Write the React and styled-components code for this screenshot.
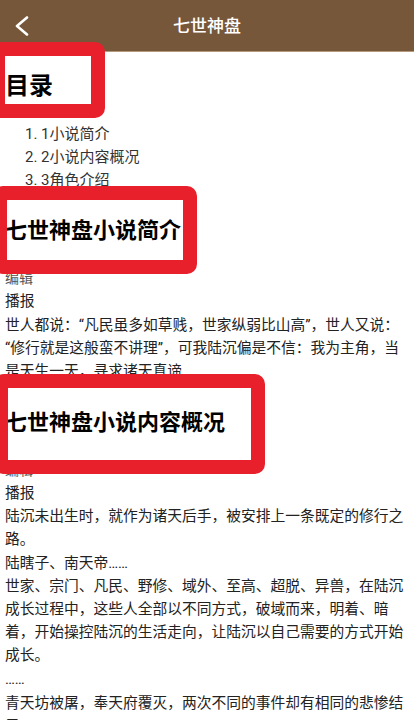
import React from "react";
import styled, { createGlobalStyle } from "styled-components";

const Global = createGlobalStyle`
  html, body {
    margin: 0;
    padding: 0;
    background: #ffffff;
    overflow-x: hidden;
  }
  body {
    font-family: Roboto, "Noto Sans CJK SC", sans-serif;
    -webkit-font-smoothing: antialiased;
  }
  p, h1, h2, ol { margin: 0; padding: 0; }
`;

const Page = styled.div`
  width: 414px;
  min-height: 720px;
  overflow: hidden;
  background: #fff;
`;

const Header = styled.header`
  height: 52px;
  background: #77573a;
  display: grid;
  grid-template-columns: 52px 1fr 52px;
  align-items: center;
  border-bottom: 1px solid #b49a7c;
  box-sizing: border-box;
`;

const BackButton = styled.button`
  border: 0;
  background: transparent;
  padding: 0 0 0 15px;
  height: 52px;
  display: flex;
  align-items: center;
  cursor: pointer;
`;

const Title = styled.h1`
  text-align: center;
  color: #ffffff;
  font-size: 17px;
  font-weight: 500;
  line-height: 52px;
`;

const Content = styled.main`
  padding: 0 0 0 5px;
`;

const HeadingWrap = styled.div`
  position: relative;
  margin-top: ${(p) => p.$mt}px;
`;

const Heading = styled.h2`
  font-size: ${(p) => p.$size}px;
  line-height: ${(p) => p.$lh}px;
  font-weight: 700;
  color: #000;
  white-space: nowrap;
`;

const Frame = styled.div`
  position: absolute;
  z-index: 2;
  top: ${(p) => p.$top}px;
  left: ${(p) => p.$left}px;
  width: ${(p) => p.$w}px;
  height: ${(p) => p.$h}px;
  box-sizing: border-box;
  border: 14px solid #e8202b;
  border-radius: 10px;
  pointer-events: none;
`;

const Toc = styled.ol`
  list-style: none;
  margin-top: 21px;
  padding-left: 20px;
`;

const TocItem = styled.li`
  font-size: 15px;
  line-height: 23px;
  color: #333;
`;

const EditLabel = styled.div`
  margin-top: 21px;
  font-size: 14px;
  line-height: 23px;
  color: #555;
`;

const Para = styled.p`
  font-size: 14.75px;
  line-height: 23px;
  color: #222;
  white-space: nowrap;
  & + & {
    margin-top: 0.6px;
  }
`;

const BackIcon = () => (
  <svg width="14" height="20" viewBox="0 0 14 20" fill="none">
    <polyline
      points="12,1.5 2,10 12,18.5"
      stroke="#fff"
      strokeWidth="2.6"
      strokeLinecap="round"
      strokeLinejoin="round"
    />
  </svg>
);

export default function App() {
  return (
    <>
      <Global />
      <Page>
        <Header>
          <BackButton aria-label="返回">
            <BackIcon />
          </BackButton>
          <Title>七世神盘</Title>
          <span />
        </Header>
        <Content>
          <HeadingWrap $mt={18}>
            <Heading $size={24} $lh={32}>目录</Heading>
            <Frame $top={-28} $left={-14} $w={114} $h={76} />
          </HeadingWrap>
          <Toc>
            <TocItem>1. 1小说简介</TocItem>
            <TocItem>2. 2小说内容概况</TocItem>
            <TocItem>3. 3角色介绍</TocItem>
          </Toc>

          <HeadingWrap $mt={24}>
            <Heading $size={22} $lh={30}>七世神盘小说简介</Heading>
            <Frame $top={-30} $left={-12} $w={204} $h={88} />
          </HeadingWrap>
          <EditLabel>编辑</EditLabel>
          <Para>播报</Para>
          <Para>
            世人都说：“凡民虽多如草贱，世家纵弱比山高”，世人又说：<br />
            “修行就是这般蛮不讲理”，可我陆沉偏是不信：我为主角，当<br />
            是天生一天，寻求诸天真谛
          </Para>

          <HeadingWrap $mt={25}>
            <Heading $size={22} $lh={30}>七世神盘小说内容概况</Heading>
            <Frame $top={-34} $left={-11} $w={271} $h={100} />
          </HeadingWrap>
          <EditLabel>编辑</EditLabel>
          <Para>播报</Para>
          <Para>
            陆沉未出生时，就作为诸天后手，被安排上一条既定的修行之<br />
            路。
          </Para>
          <Para>陆瞎子、南天帝……</Para>
          <Para>
            世家、宗门、凡民、野修、域外、至高、超脱、异兽，在陆沉<br />
            成长过程中，这些人全部以不同方式，破域而来，明着、暗<br />
            着，开始操控陆沉的生活走向，让陆沉以自己需要的方式开始<br />
            成长。
          </Para>
          <Para>……</Para>
          <Para>
            青天坊被屠，奉天府覆灭，两次不同的事件却有相同的悲惨结<br />
            局。
          </Para>
        </Content>
      </Page>
    </>
  );
}
